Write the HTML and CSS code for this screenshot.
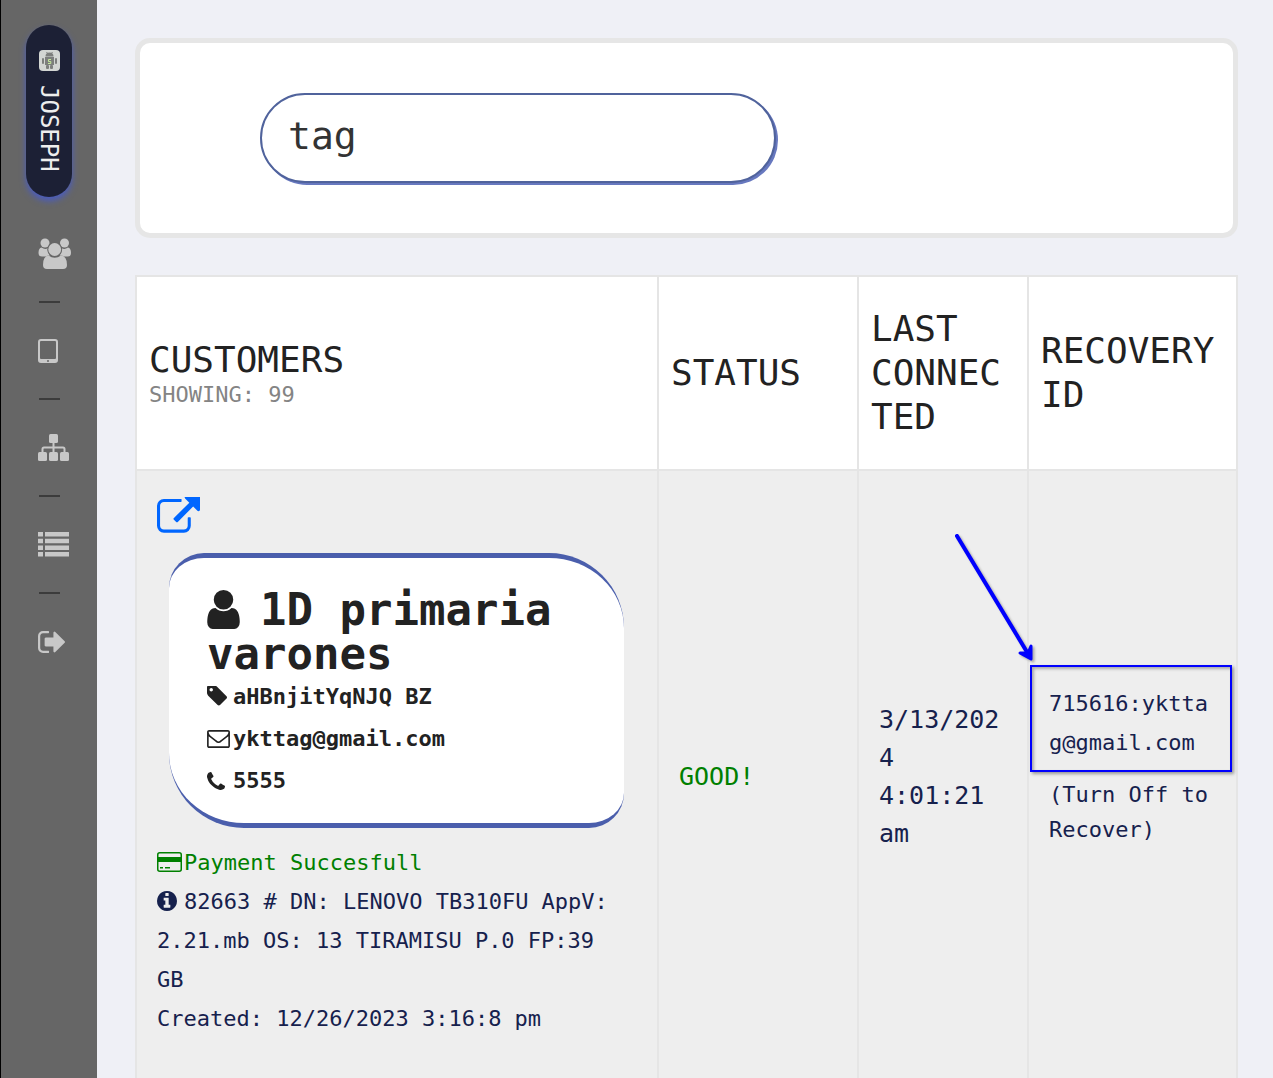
FILE: index.html
```html
<!DOCTYPE html>
<html lang="en">
<head>
<meta charset="utf-8">
<title>Customers</title>
<link rel="stylesheet" href="styles.css">
</head>
<body>
<div class="app">
  <nav class="sidebar" aria-label="Main">
    <a class="profile" href="#">
      <svg class="profile-icon" viewBox="0 0 21 21" aria-hidden="true">
        <rect width="21" height="21" rx="4" fill="#d3d6d3"/>
        <g fill="#7d7f7d">
          <path d="M6.500 6.500a4 4 0 0 1 8 0z"/>
          <path d="M7.500 2l1.500 2M13.500 2l-1.500 2" stroke="#7d7f7d"/>
          <rect x="6" y="7" width="9" height="8"/>
          <rect x="3" y="8" width="2" height="6" rx="1"/>
          <rect x="16" y="8" width="2" height="6" rx="1"/>
          <rect x="7" y="15" width="3" height="4" rx="1"/>
          <rect x="11" y="15" width="3" height="4" rx="1"/>
        </g>
        <path d="M12 9.500H9.500v2h2.300v2H9" fill="none" stroke="#c4e89a"/>
      </svg>
      <span>JOSEPH</span>
    </a>
    <a class="nav-item" href="#" aria-label="Customers">
      <svg width="34" height="32" viewBox="0 0 34 32" fill="currentColor">
        <circle cx="7" cy="5" r="4.500"/><circle cx="26.500" cy="5" r="4.500"/>
        <path d="M3.500 9.500Q7 12 10 10Q9 15 12 17.500Q9 17.500 7.500 18.500H4Q.5 18.500 .5 15Q.5 10 3.500 9.500z"/>
        <path d="M30 9.500Q26.500 12 23.500 10Q24.500 15 21.500 17.500Q24.500 17.500 26 18.500H30Q33 18.500 33 15Q33 10 30 9.500z"/>
        <circle cx="16.700" cy="11.500" r="7.400" fill="#666"/>
        <circle cx="16.700" cy="11.500" r="6.400"/>
        <path d="M10.500 17.500Q16.700 22 23 17.500Q29 18 29 27Q29 31 25 31H9Q5 31 5 27Q5 18 10.500 17.500z"/>
      </svg>
    </a>
    <hr class="nav-rule">
    <a class="nav-item" href="#" aria-label="Devices">
      <svg width="20" height="24" viewBox="0 0 20 24" fill="currentColor">
        <path fill-rule="evenodd" d="M3 0H17Q20 0 20 3V21Q20 24 17 24H3Q0 24 0 21V3Q0 0 3 0zM3 2Q2 2 2 3V19Q2 20 3 20H17Q18 20 18 19V3Q18 2 17 2zM10 21a1 1 0 1 0 0 2a1 1 0 1 0 0-2z"/>
      </svg>
    </a>
    <hr class="nav-rule">
    <a class="nav-item" href="#" aria-label="Hierarchy">
      <svg width="31" height="27" viewBox="0 0 31 27" fill="currentColor">
        <rect x="11" width="9" height="9" rx="1.500"/><rect y="18" width="9" height="9" rx="1.500"/>
        <rect x="11" y="18" width="9" height="9" rx="1.500"/><rect x="22" y="18" width="9" height="9" rx="1.500"/>
        <path d="M15.500 8V19M4.500 19V15Q4.500 13.500 6 13.500H25Q26.500 13.500 26.500 15V19" fill="none" stroke="currentColor" stroke-width="2"/>
      </svg>
    </a>
    <hr class="nav-rule">
    <a class="nav-item" href="#" aria-label="List">
      <svg width="31" height="25" viewBox="0 0 31 25" fill="currentColor">
        <path d="M0 0h5v4.500H0zM7 0h24v4.500H7zM0 6.700h5v4.500H0zM7 6.700h24v4.500H7zM0 13.400h5v4.500H0zM7 13.400h24v4.500H7zM0 20h5v4.500H0zM7 20h24v4.500H7z"/>
      </svg>
    </a>
    <hr class="nav-rule">
    <a class="nav-item" href="#" aria-label="Sign out">
      <svg width="27" height="22" viewBox="0 256 1568 1280" fill="currentColor">
        <path d="M640 1440q0 4 1 20t.5 26.500-3 23.500-10 19.500-20.500 6.500h-320q-119 0-203.500-84.500t-84.500-203.500v-704q0-119 84.500-203.500t203.500-84.500h320q13 0 22.500 9.500t9.500 22.500q0 4 1 20t.5 26.500-3 23.500-10 19.500-20.500 6.500h-320q-66 0-113 47t-47 113v704q0 66 47 113t113 47h312l11.500 1 11.500 3 8 5.500 7 9 2 13.500zm928-544q0 26-19 45l-544 544q-19 19-45 19t-45-19-19-45v-288h-448q-26 0-45-19t-19-45v-384q0-26 19-45t45-19h448v-288q0-26 19-45t45-19 45 19l544 544q19 19 19 45z"/>
      </svg>
    </a>
  </nav>

  <main class="content">
    <form class="search">
      <input class="search-input" type="text" value="tag" aria-label="Search customers">
    </form>

    <table class="customers">
      <colgroup><col><col class="col-status"><col class="col-date"><col class="col-recovery"></colgroup>
      <thead>
        <tr>
          <th scope="col">CUSTOMERS<small class="count">SHOWING: 99</small></th>
          <th scope="col">STATUS</th>
          <th scope="col">LAST CONNECTED</th>
          <th scope="col">RECOVERY ID</th>
        </tr>
      </thead>
      <tbody>
        <tr>
          <td class="customer">
            <a class="open-link" href="#" aria-label="Open customer">
              <svg width="43" height="36" viewBox="0 64 1792 1472" fill="currentColor">
                <path d="M1408 928v320q0 119-84.500 203.500t-203.500 84.500h-832q-119 0-203.500-84.500t-84.500-203.500v-832q0-119 84.500-203.500t203.500-84.500h704q14 0 23 9t9 23v64q0 14-9 23t-23 9h-704q-66 0-113 47t-47 113v832q0 66 47 113t113 47h832q66 0 113-47t47-113v-320q0-14 9-23t23-9h64q14 0 23 9t9 23zm384-864v512q0 26-19 45t-45 19-45-19l-176-176-652 652q-10 10-23 10t-23-10l-114-114q-10-10-10-23t10-23l652-652-176-176q-19-19-19-45t19-45 45-19h512q26 0 45 19t19 45z"/>
              </svg>
            </a>
            <div class="card">
              <h2 class="card-name"><svg class="user-icon" width="33" height="39" viewBox="256 128 1280 1536" fill="currentColor" aria-hidden="true"><path d="M1536 1399q0 109-62.500 187t-150.500 78h-854q-88 0-150.500-78t-62.500-187q0-85 8.500-160.500t31.500-152 58.500-131 94-89 134.500-34.500q131 128 313 128t313-128q76 0 134.500 34.500t94 89 58.500 131 31.500 152 8.500 160.500zm-256-887q0 159-112.500 271.500t-271.500 112.500-271.500-112.500-112.500-271.500 112.500-271.500 271.500-112.500 271.500 112.500 112.500 271.500z"/></svg>1D primaria varones</h2>
              <div class="card-line">
                <span class="icon"><svg width="20" height="20" viewBox="128 192 1515 1451" fill="currentColor" aria-hidden="true"><path d="M576 448q0-53-37.500-90.500t-90.500-37.500-90.500 37.500-37.500 90.500 37.500 90.500 90.500 37.500 90.500-37.500 37.500-90.500zm1067 576q0 53-37 90l-491 492q-39 37-91 37-53 0-90-37l-715-716q-38-37-64.500-101t-26.500-117v-416q0-52 38-90t90-38h416q53 0 117 26.500t102 64.500l715 714q37 39 37 91z"/></svg></span>aHBnjitYqNJQ BZ
              </div>
              <div class="card-line">
                <span class="icon"><svg width="23" height="18" viewBox="0 256 1792 1408" fill="currentColor" aria-hidden="true"><path d="M1664 1504v-768q-32 36-69 66-268 206-426 338-51 43-83 67t-86.500 48.500-102.500 24.500h-2q-48 0-102.500-24.500t-86.500-48.500-83-67q-158-132-426-338-37-30-69-66v768q0 13 9.500 22.500t22.500 9.500h1472q13 0 22.500-9.500t9.500-22.500zm0-1051v-24.500l-.5-13-3-12.500-5.500-9-9-7.500-14-2.500h-1472q-13 0-22.500 9.500t-9.500 22.500q0 168 147 284 193 152 401 317 6 5 35 29.500t46 37.500 44.500 31.500 50.500 27.500 43 9h2q20 0 43-9t50.500-27.500 44.500-31.500 46-37.500 35-29.500q208-165 401-317 54-43 100.500-115.500t46.500-131.500zm128-37v1088q0 66-47 113t-113 47h-1472q-66 0-113-47t-47-113v-1088q0-66 47-113t113-47h1472q66 0 113 47t47 113z"/></svg></span>ykttag@gmail.com
              </div>
              <div class="card-line">
                <span class="icon"><svg width="18" height="18" viewBox="192 128 1408 1408" fill="currentColor" aria-hidden="true"><path d="M1600 1240q0 27-10 70.500t-21 68.500q-21 50-122 106-94 51-186 51-27 0-53-3.500t-57.500-12.500-47-14.500-55.500-20.500-49-18q-98-35-175-83-127-79-264-216t-216-264q-48-77-83-175-3-9-18-49t-20.500-55.500-14.500-47-12.500-57.500-3.500-53q0-92 51-186 56-101 106-122 25-11 68.500-21t70.500-10q14 0 21 3 18 6 53 76 11 19 30 54t35 63.500 31 53.500q3 4 17.500 25t21.500 35.500 7 28.500q0 20-28.500 50t-62 55-62 53-28.500 46q0 9 5 22.500t8.500 20.500 14 24 11.500 19q76 137 174 235t235 174q2 1 19 11.500t24 14 20.500 8.500 22.500 5q18 0 46-28.500t53-62 55-62 50-28.500q14 0 28.500 7t35.500 21.500 25 17.500q25 15 53.500 31t63.500 35 54 30q70 35 76 53 3 7 3 21z"/></svg></span>5555
              </div>
            </div>
            <div class="details">
              <div class="paid"><span class="icon"><svg width="25" height="20" viewBox="0 0 25 20" aria-hidden="true"><rect x=".75" y=".75" width="23.500" height="18.500" rx="2" fill="none" stroke="currentColor" stroke-width="1.500"/><path d="M1 5h23v5H1zM3 15h3v1.500H3zM8 15h5v1.500H8z" fill="currentColor"/></svg></span>Payment Succesfull</div>
              <div><span class="icon"><svg width="20" height="20" viewBox="128 128 1536 1536" fill="currentColor" aria-hidden="true"><path d="M1152 1376v-160q0-14-9-23t-23-9h-96v-512q0-14-9-23t-23-9h-320q-14 0-23 9t-9 23v160q0 14 9 23t23 9h96v320h-96q-14 0-23 9t-9 23v160q0 14 9 23t23 9h448q14 0 23-9t9-23zm-128-896v-160q0-14-9-23t-23-9h-192q-14 0-23 9t-9 23v160q0 14 9 23t23 9h192q14 0 23-9t9-23zm640 416q0 209-103 385.500t-279.500 279.500-385.500 103-385.500-103-279.500-279.500-103-385.500 103-385.500 279.500-279.500 385.500-103 385.500 103 279.500 279.500 103 385.500z"/></svg></span>82663 # DN: LENOVO TB310FU AppV: 2.21.mb OS: 13 TIRAMISU P.0 FP:39 GB</div>
              <div>Created: 12/26/2023 3:16:8 pm</div>
            </div>
          </td>
          <td class="status">GOOD!</td>
          <td class="date">3/13/2024<br>4:01:21 am</td>
          <td class="recovery">
            <div class="recovery-id">715616:ykttag@gmail.com
              <span class="highlight"></span>
              <svg class="arrow" width="84" height="136" viewBox="0 0 84 136" fill="none" stroke="#0000fe" stroke-width="4" stroke-linecap="round" stroke-linejoin="round" aria-hidden="true">
                <path d="M4 4L77 125"/><path d="M67 121L78 127V114L75 121z" fill="#0000fe" stroke-width="3"/>
              </svg>
            </div>
            <div class="recovery-note">(Turn Off to Recover)</div>
          </td>
        </tr>
      </tbody>
    </table>
  </main>
</div>
</body>
</html>
```
FILE: styles.css
```css
* { box-sizing: border-box; }

body {
  margin: 0;
  background: #eff0f6;
  color: #16214d;
  font-family: "DejaVu Sans Mono", "Liberation Mono", monospace;
  font-size: 22px;
}

svg { display: block; }

.app { display: flex; min-height: 100vh; }

/* Sidebar */
.sidebar {
  flex: 0 0 97px;
  padding-top: 25px;
  border-left: 1px solid #000;
  background: #666;
}

.profile {
  display: flex;
  align-items: center;
  gap: 14px;
  width: 46px;
  height: 172px;
  margin: 0 0 9px 25px;
  padding-top: 25px;
  border-radius: 23px;
  background: #1c2035;
  box-shadow: 0 4px 6px #4a5cc0;
  color: #eee;
  font-size: 24px;
  line-height: 46px;
  text-decoration: none;
  writing-mode: vertical-rl;
}

.profile-icon { width: 21px; height: 21px; }

.nav-item {
  display: flex;
  align-items: center;
  height: 95px;
  padding-left: 37px;
  color: #c8c8c8;
}

.nav-rule {
  width: 21px;
  height: 2px;
  margin: 0 0 0 38px;
  border: 0;
  background: #3c3c3c;
}

/* Main column */
.content { flex: 1; min-width: 0; padding: 38px 35px 0 38px; }

.search {
  margin-bottom: 37px;
  padding: 50px 120px;
  border: 5px solid #e6e6e6;
  border-radius: 15px;
  background: #fff;
}

.search-input {
  display: block;
  width: 100%;
  max-width: 516px;
  height: 90px;
  padding: 0 26px 4px;
  border: 2px solid #50639c;
  border-radius: 45px;
  outline: 0;
  background: #fff;
  box-shadow: 2px 2px 0 #6778bf;
  color: #333;
  font: inherit;
  font-size: 38px;
}

/* Customer table */
.customers {
  width: 100%;
  table-layout: fixed;
  border-collapse: collapse;
}

.col-status { width: 200px; }
.col-date { width: 170px; }
.col-recovery { width: 209px; }

th, td {
  border: 2px solid #e5e5e5;
  text-align: left;
  vertical-align: middle;
  overflow-wrap: anywhere;
}

th {
  padding: 30px 12px;
  background: #fff;
  color: #222;
  font-size: 36px;
  font-weight: 400;
  line-height: 44px;
}

.count { display: block; color: #848484; font-size: 22px; line-height: 26px; }

td { padding: 26px 20px 44px; background: #eee; }

.open-link { display: block; width: 43px; color: #06f; }

.card {
  margin: 20px 13px 15px 12px;
  padding: 30px 37px 21px 38px;
  border: solid #4a5eac;
  border-width: 5px 0;
  border-radius: 35px 75px 35px 75px;
  background: #fff;
  color: #222;
  font-weight: 700;
}

.card-name { margin: 0; font-size: 44px; line-height: 44px; }
.user-icon { display: inline-block; margin-right: 20px; vertical-align: -4px; }
.card-line { line-height: 42px; }

.icon { display: inline-block; width: 27px; vertical-align: -2px; }
.card .icon { width: 26px; }

.details { padding-right: 24px; line-height: 39px; }
.paid { color: green; }

.status, .date { padding-block: 20px; font-size: 25px; line-height: 38px; }
.status { color: green; }

.recovery { padding-block: 0 22px; }
.recovery-id { position: relative; margin-bottom: 15px; line-height: 39px; }
.recovery-note { line-height: 35px; }

/* Annotation drawn over the recovery id */
.highlight {
  position: absolute;
  inset: -19px -16px -10px -19px;
  border: 2px solid #0000fe;
  box-shadow: 2px 2px 3px #999, inset 2px 2px 3px #aaa;
}

.arrow {
  position: absolute;
  left: -96px;
  bottom: 94px;
  filter: drop-shadow(2px 2px 1px #aaa);
}
```
